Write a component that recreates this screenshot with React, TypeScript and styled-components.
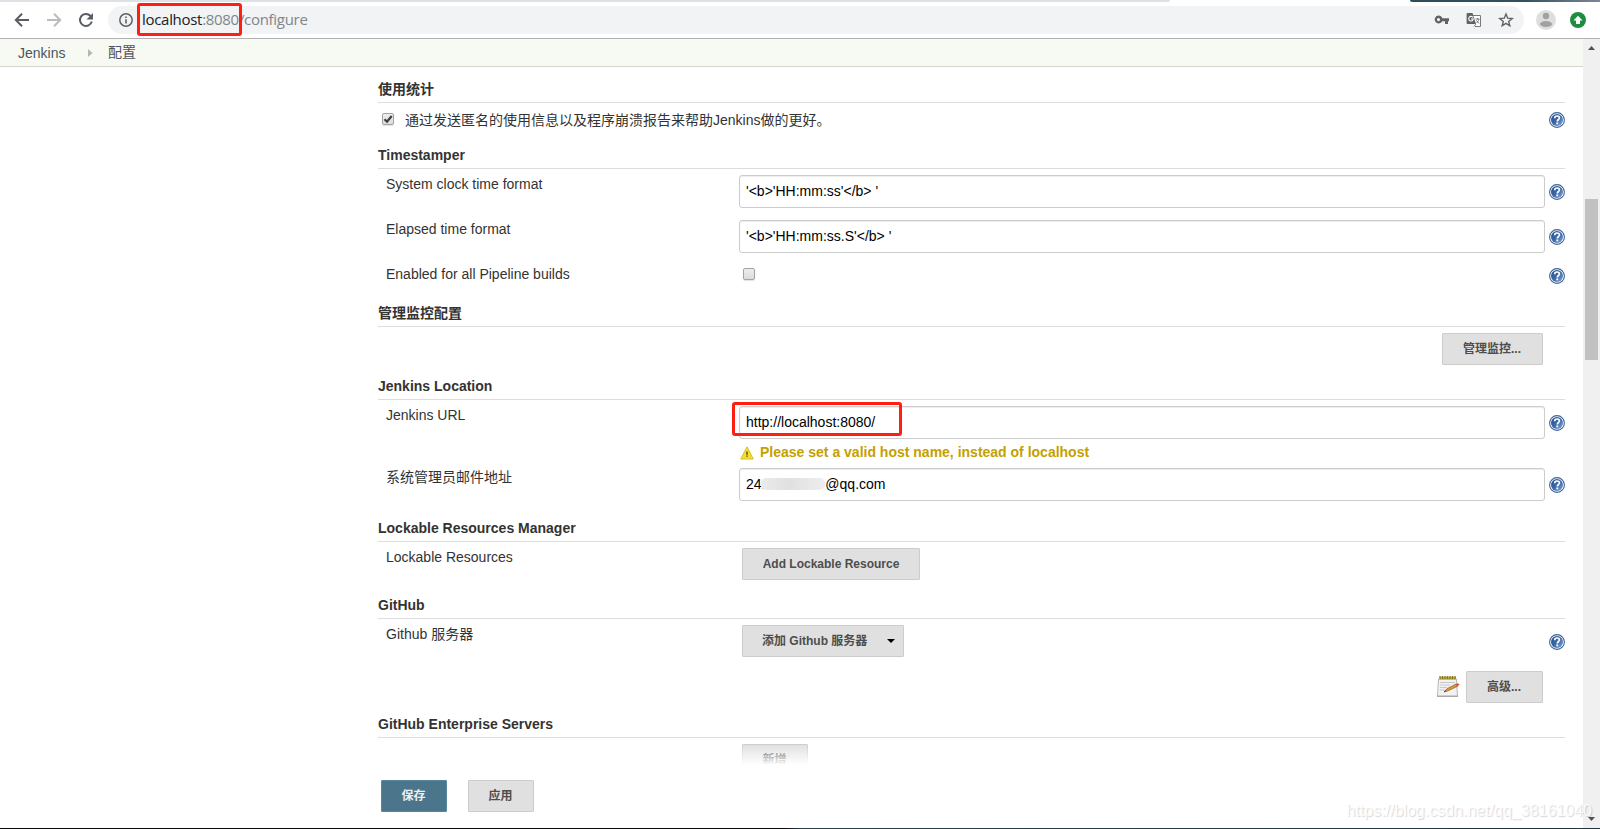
import React from "react";
import styled, { createGlobalStyle } from "styled-components";

const Global = createGlobalStyle`
  * { box-sizing: border-box; }
  body { margin: 0; background: #fff; overflow: hidden; }
  button, input { font-family: inherit; }
`;

const sans = `"Liberation Sans", "Noto Sans CJK SC", sans-serif`;

const Screen = styled.div`
  position: relative;
  width: 1600px;
  height: 829px;
  display: flex;
  flex-direction: column;
  background: #fff;
  color: #333;
  font: 14px ${sans};
  overflow: hidden;
`;

const TabStrip = styled.div`
  height: 2px;
  flex: none;
  display: flex;
  background: #fff;
`;
const InactiveTabs = styled.div`
  width: 1170px;
  border-bottom-right-radius: 2px;
  background: #dee1e6;
`;
const ActiveTab = styled.div`
  width: 240px;
  background: #fff;
`;
const Desktop = styled.div`
  flex: 1;
  border-bottom-left-radius: 2px;
  background: linear-gradient(90deg, #2e4c5a, #34505e 60%, #7a8799);
`;

const Toolbar = styled.div`
  height: 37px;
  flex: none;
  display: flex;
  align-items: center;
  padding: 0 14px 0 14px;
  border-bottom: 1px solid #b2b0b2;
`;
const NavIcon = styled.svg<{ $color?: string }>`
  width: 16px;
  height: 16px;
  flex: none;
  margin-right: 16px;
  fill: none;
  stroke: ${(p) => p.$color ?? "#5a5d61"};
  stroke-width: 2;
`;
const AddressBar = styled.div`
  width: 1416px;
  height: 28px;
  margin-left: -2px;
  padding: 0 10px 0 11px;
  display: flex;
  align-items: center;
  border-radius: 14px;
  background: #f1f3f4;
`;
const Url = styled.div`
  flex: 1;
  margin-left: 9px;
  padding-bottom: 2px;
  font: 15px/20px "Open Sans", "Noto Sans", sans-serif;
  letter-spacing: -0.3px;
  color: #80868b;
  span { color: #202124; }
`;
const BarIcons = styled.div`
  display: flex;
  align-items: center;
  gap: 16px;
`;
const Account = styled.div`
  display: flex;
  align-items: center;
  gap: 14px;
  margin-left: 12px;
`;

const Breadcrumbs = styled.nav`
  height: 28px;
  flex: none;
  display: flex;
  align-items: center;
  padding-left: 18px;
  background: #f6faf2;
  border-bottom: 1px solid #d3d7cf;
  color: #4d545d;
  font-size: 14px;
`;
const Crumb = styled.span<{ $width?: number }>`
  width: ${(p) => (p.$width ? `${p.$width}px` : "auto")};
  line-height: 20px;
  padding-bottom: ${(p) => (p.$width ? 0 : "2px")};
`;
const CrumbArrow = styled.svg`
  width: 5px;
  height: 8px;
  margin-right: 15px;
`;

const Body = styled.div`
  flex: 1;
  min-height: 0;
  display: flex;
`;
const Page = styled.div`
  width: 1583px;
  display: flex;
  flex-direction: column;
`;
const Config = styled.main`
  height: 698px;
  padding: 6px 18px 0 378px;
  overflow: hidden;
`;
const Heading = styled.h2`
  height: 30px;
  margin: 0;
  padding-top: 6px;
  border-bottom: 1px solid #ddd;
  font-size: 14px;
  line-height: 20px;
  font-weight: bold;
  white-space: nowrap;
`;
const Row = styled.div<{ $h: number }>`
  height: ${(p) => p.$h}px;
  display: grid;
  grid-template-columns: 361px 806px 20px;
  padding-top: 6px;
`;
const Label = styled.label`
  padding-left: 8px;
  line-height: 18px;
  white-space: nowrap;
`;
const Setting = styled.div<{ $end?: boolean }>`
  display: flex;
  align-items: flex-start;
  align-content: flex-start;
  flex-wrap: wrap;
  gap: 5px 6px;
  padding: ${(p) => (p.$end ? "0 2px 0 0" : "0")};
  justify-content: ${(p) => (p.$end ? "flex-end" : "flex-start")};
`;
const CheckLine = styled.div`
  grid-column: 1 / 3;
  display: flex;
  align-items: center;
  height: 22px;
  padding-left: 4px;
  gap: 11px;
  line-height: 20px;
  white-space: nowrap;
`;
const TextBox = styled.div<{ $lift?: number }>`
  width: 806px;
  height: 33px;
  display: flex;
  align-items: center;
  padding: 0 6px ${(p) => p.$lift ?? 2}px;
  border: 1px solid #ccc;
  border-radius: 3px;
  box-shadow: inset 0 1px 1px rgba(0, 0, 0, 0.075);
  color: #000;
  font-size: 14px;
  white-space: pre;
`;
const Redacted = styled.span`
  position: relative;
  width: 64px;
  height: 12px;
  margin-left: -8px;
  border-radius: 5px;
  background: linear-gradient(90deg, #ebebeb, #e0e0e0 45%, #eee);
`;
const Warning = styled.div`
  display: flex;
  align-items: center;
  gap: 6px;
  height: 16px;
  padding-left: 1px;
  color: #c4a000;
  font-weight: bold;
  svg { position: relative; top: 1px; }
`;
const Check = styled.span<{ $offset?: boolean }>`
  width: 12px;
  height: 12px;
  margin: ${(p) => (p.$offset ? "3px 0 0 4px" : "-3px 0 0")};
  border: 1px solid #a3a3a3;
  border-radius: 2px;
  background: linear-gradient(#ededed, #dcdcdc);
  box-shadow: 0 1px 1px rgba(0, 0, 0, 0.12);
  svg { display: block; width: 10px; height: 10px; }
`;
const Button = styled.button<{ $w: number; $primary?: boolean; $indent?: boolean; $latin?: boolean; $menu?: boolean }>`
  width: ${(p) => p.$w}px;
  height: 32px;
  flex: none;
  display: flex;
  align-items: center;
  justify-content: ${(p) => (p.$menu ? "space-between" : "center")};
  padding: ${(p) => (p.$latin ? "0" : p.$menu ? "0 8px 3px 19px" : "0 1px 3px 0")};
  margin-left: ${(p) => (p.$indent ? "3px" : "0")};
  border: 1px solid ${(p) => (p.$primary ? "#5788a1" : "#ccc")};
  border-radius: 1px;
  background: ${(p) => (p.$primary ? "#4b758b" : "#e0e0e0")};
  color: ${(p) => (p.$primary ? "#eee" : "#4d4d4d")};
  font: bold 12px ${sans};
  white-space: nowrap;
  svg { margin-top: 2px; }
`;
const HelpCell = styled.div<{ $top: number }>`
  padding: ${(p) => p.$top}px 0 0 4px;
  svg { display: block; }
`;
const ActionBar = styled.footer`
  position: relative;
  flex: 1;
  display: flex;
  align-items: flex-start;
  gap: 21px;
  padding: 15px 0 0 381px;
  background: #fff;
  &::before {
    content: "";
    position: absolute;
    left: 0;
    right: 0;
    top: -21px;
    height: 21px;
    background: linear-gradient(rgba(255, 255, 255, 0), #fff);
  }
`;
const ScrollTrack = styled.div`
  width: 17px;
  display: flex;
  flex-direction: column;
  align-items: center;
  background: #f0f0f0;
  margin-top: -28px;
`;
const ScrollArrow = styled.svg`
  width: 17px;
  height: 17px;
  flex: none;
`;
const ScrollThumb = styled.div`
  width: 13px;
  height: 161px;
  margin: 143px 0 auto;
  background: #c1c1c1;
`;
const Taskbar = styled.div`
  height: 1px;
  flex: none;
  background: linear-gradient(90deg, #080808 49%, #2b3d45 50%, #22333c);
`;
const Marker = styled.div<{ $x: number; $y: number; $w: number; $h: number }>`
  position: absolute;
  left: ${(p) => p.$x}px;
  top: ${(p) => p.$y}px;
  width: ${(p) => p.$w}px;
  height: ${(p) => p.$h}px;
  border: 3px solid #fe1f10;
  border-radius: 3px;
`;
const Watermark = styled.div`
  position: absolute;
  right: 8px;
  bottom: 8px;
  font: 16px/20px ${sans};
  color: rgba(255, 255, 255, 0.85);
  text-shadow: 1px 1px 1px rgba(0, 0, 0, 0.16);
`;

const HelpIcon = () => (
  <svg width="16" height="16" viewBox="0 0 16 16">
    <defs>
      <linearGradient id="helpFill" x1="0" y1="0" x2="1" y2="1">
        <stop offset="0" stopColor="#24508f" />
        <stop offset="0.5" stopColor="#3b68a8" />
        <stop offset="1" stopColor="#86a6d2" />
      </linearGradient>
    </defs>
    <circle cx="8" cy="8" r="7.4" fill="#fff" stroke="#3c6296" strokeWidth="1.1" />
    <circle cx="8" cy="8" r="6" fill="url(#helpFill)" />
    <path d="M5.7 6.2C5.7 4.7 6.7 4 8 4s2.4.8 2.4 2c0 1.5-2.1 1.6-2.1 3.4" fill="none" stroke="#fff" strokeWidth="1.7" />
    <rect x="7.3" y="10.5" width="1.9" height="1.8" fill="#fff" />
  </svg>
);

const Help = ({ top }: { top: number }) => (
  <HelpCell $top={top}>
    <HelpIcon />
  </HelpCell>
);

const WarningIcon = () => (
  <svg width="14" height="14" viewBox="0 0 14 14">
    <path d="M7 .8 13.3 13H.7Z" fill="#f3df2c" stroke="#d9bf2a" strokeWidth="1" strokeLinejoin="round" />
    <path d="M7 5.500v3.300M7 9.500v1.300" stroke="#5d5518" strokeWidth="1.500" />
  </svg>
);

const Notepad = styled.svg`
  width: 24px;
  height: 24px;
  margin-top: 4px;
`;
const NotepadIcon = () => (
  <Notepad viewBox="0 0 24 24">
    <path d="M2.500 4h18l1 17.500H1.500Z" fill="#f2f2f2" stroke="#a5a5a5" strokeWidth=".8" />
    <path d="M1 20.500h21v1.500H1Z" fill="#aaa" />
    <path d="M3.500 1.500h16.500v3H3.500Z" fill="#b5a63e" />
    <path d="M4 1v3M6.500 1v3M9 1v3M11.500 1v3M14 1v3M16.500 1v3M19 1v3" stroke="#81741a" />
    <path d="M4 7.500h15M4 10h10M4 12.500h7M4 15h5" stroke="#c8c8c8" />
    <path d="m8 17 3-3.300L20 9l1.500 2.300L11.500 16Z" fill="#d9993a" stroke="#86591e" strokeWidth=".7" />
    <path d="m8 17 1.500-1.800.9 1Z" fill="#444" />
    <path d="m20 9 2-.8 1.500 1.500-2 1.600Z" fill="#e0473a" />
  </Notepad>
);

const KeyIcon = () => (
  <svg width="16" height="16" viewBox="0 0 16 16">
    <path fillRule="evenodd" fill="#5f6368" d="M4.500 3.500a4 4 0 0 1 3.800 2.800H15v3h-1V12h-3V9.300H8.300A4 4 0 1 1 4.500 3.500Zm0 2.500a1.500 1.500 0 1 0 0 3.200 1.500 1.500 0 0 0 0-3.200Z" />
  </svg>
);
const TranslateIcon = () => (
  <svg width="16" height="16" viewBox="0 0 16 16">
    <path d="M7 3.500h7.500v11H9" fill="#fff" stroke="#777b80" />
    <path d="M1.500 1h5l3.500 11H1.500a.9.900 0 0 1-.9-.9V1.900A.9.900 0 0 1 1.500 1Z" fill="#5f6368" />
    <path d="M7 5.500A2.300 2.300 0 1 0 7.300 7H5" fill="none" stroke="#fff" strokeWidth="1.100" />
    <path d="M9.500 7h4M11.500 6v1M13 7c-.5 2-1.500 3-2.500 4M10.500 8.500 13 11.500M8 14.500l2-2.500" fill="none" stroke="#777b80" />
  </svg>
);
const StarIcon = () => (
  <svg width="16" height="16" viewBox="0 0 16 16">
    <path d="m8 2 1.700 4.200 4.500.3-3.500 2.900 1.100 4.400L8 11.400l-3.800 2.400 1.100-4.400-3.500-2.900 4.500-.3Z" fill="none" stroke="#5f6368" strokeWidth="1.400" />
  </svg>
);
const AvatarIcon = () => (
  <svg width="20" height="20" viewBox="0 0 20 20">
    <circle cx="10" cy="10" r="10" fill="#dedede" />
    <circle cx="10" cy="6" r="3.200" fill="#a1a1a1" />
    <ellipse cx="10" cy="14" rx="6" ry="3" fill="#a1a1a1" />
  </svg>
);
const UpdateIcon = () => (
  <svg width="16" height="16" viewBox="0 0 16 16">
    <circle cx="8" cy="8" r="8" fill="#1e8e3e" />
    <path d="m8 3.700 4.500 4.800H10V12H6V8.500H3.500Z" fill="#fff" />
  </svg>
);

export default function App() {
  return (
    <Screen>
      <Global />
      <TabStrip>
        <InactiveTabs />
        <ActiveTab />
        <Desktop />
      </TabStrip>
      <Toolbar>
        <NavIcon viewBox="0 0 16 16">
          <path d="M15 8H2M8 1.700 1.800 8 8 14.300" />
        </NavIcon>
        <NavIcon viewBox="0 0 16 16" $color="#babcbe">
          <path d="M1 8h13M8 1.700 14.200 8 8 14.300" />
        </NavIcon>
        <NavIcon viewBox="0 0 16 16">
          <path d="M13.800 9.500A6 6 0 1 1 12.300 3.700L14 5.500" />
          <path d="M15 1v6.500H8.500Z" fill="#5a5d61" stroke="none" />
        </NavIcon>
        <AddressBar>
          <svg width="14" height="14" viewBox="0 0 14 14">
            <circle cx="7" cy="7" r="6.200" fill="none" stroke="#5f6368" strokeWidth="1.500" />
            <path d="M7 6.200v4.300M7 3.500v1.600" stroke="#5f6368" strokeWidth="1.600" />
          </svg>
          <Url>
            <span>localhost</span>:8080/configure
          </Url>
          <BarIcons>
            <KeyIcon />
            <TranslateIcon />
            <StarIcon />
          </BarIcons>
        </AddressBar>
        <Account>
          <AvatarIcon />
          <UpdateIcon />
        </Account>
      </Toolbar>
      <Breadcrumbs>
        <Crumb $width={70}>Jenkins</Crumb>
        <CrumbArrow viewBox="0 0 5 8">
          <path d="M0 0 4.500 4 0 8Z" fill="#b4b8b1" />
        </CrumbArrow>
        <Crumb>配置</Crumb>
      </Breadcrumbs>
      <Body>
        <Page>
          <Config>
            <Heading>使用统计</Heading>
            <Row $h={36}>
              <CheckLine>
                <Check>
                  <svg viewBox="0 0 10 10">
                    <path d="M1.500 5.300 4 7.700 8.700 2" fill="none" stroke="#3c3c3c" strokeWidth="2.200" />
                  </svg>
                </Check>
                通过发送匿名的使用信息以及程序崩溃报告来帮助Jenkins做的更好。
              </CheckLine>
              <Help top={3} />
            </Row>

            <Heading>Timestamper</Heading>
            <Row $h={45}>
              <Label>System clock time format</Label>
              <Setting>
                <TextBox>{"'<b>'HH:mm:ss'</b> '"}</TextBox>
              </Setting>
              <Help top={9} />
            </Row>
            <Row $h={45}>
              <Label>Elapsed time format</Label>
              <Setting>
                <TextBox>{"'<b>'HH:mm:ss.S'</b> '"}</TextBox>
              </Setting>
              <Help top={9} />
            </Row>
            <Row $h={38}>
              <Label>Enabled for all Pipeline builds</Label>
              <Setting>
                <Check $offset />
              </Setting>
              <Help top={3} />
            </Row>

            <Heading>管理监控配置</Heading>
            <Row $h={43}>
              <Label />
              <Setting $end>
                <Button $w={101}>管理监控...</Button>
              </Setting>
            </Row>

            <Heading>Jenkins Location</Heading>
            <Row $h={62}>
              <Label>Jenkins URL</Label>
              <Setting>
                <TextBox>http://localhost:8080/</TextBox>
                <Warning>
                  <WarningIcon />
                  Please set a valid host name, instead of localhost
                </Warning>
              </Setting>
              <Help top={9} />
            </Row>
            <Row $h={50}>
              <Label>系统管理员邮件地址</Label>
              <Setting>
                <TextBox>
                  241
                  <Redacted />
                  @qq.com
                </TextBox>
              </Setting>
              <Help top={9} />
            </Row>

            <Heading>Lockable Resources Manager</Heading>
            <Row $h={47}>
              <Label>Lockable Resources</Label>
              <Setting>
                <Button $w={178} $indent $latin>
                  Add Lockable Resource
                </Button>
              </Setting>
            </Row>

            <Heading>GitHub</Heading>
            <Row $h={46}>
              <Label>Github 服务器</Label>
              <Setting>
                <Button $w={162} $indent $menu>
                  添加 Github 服务器
                  <svg width="8" height="4" viewBox="0 0 8 4">
                    <path d="M0 0h8L4 4Z" fill="#000" />
                  </svg>
                </Button>
              </Setting>
              <Help top={9} />
            </Row>
            <Row $h={43}>
              <Label />
              <Setting $end>
                <NotepadIcon />
                <Button $w={77}>高级...</Button>
              </Setting>
            </Row>

            <Heading>GitHub Enterprise Servers</Heading>
            <Row $h={47}>
              <Label />
              <Setting>
                <Button $w={66} $indent>
                  新增
                </Button>
              </Setting>
            </Row>
          </Config>
          <ActionBar>
            <Button $w={66} $primary>
              保存
            </Button>
            <Button $w={66}>应用</Button>
          </ActionBar>
        </Page>
        <ScrollTrack>
          <ScrollArrow viewBox="0 0 17 17">
            <path d="M5 11h7L8.500 7Z" fill="#505050" />
          </ScrollArrow>
          <ScrollThumb />
          <ScrollArrow viewBox="0 0 17 17">
            <path d="M5 6h7l-3.500 4Z" fill="#505050" />
          </ScrollArrow>
        </ScrollTrack>
      </Body>
      <Taskbar />
      <Marker $x={137} $y={3} $w={105} $h={33} />
      <Marker $x={732} $y={402} $w={170} $h={34} />
      <Watermark>https://blog.csdn.net/qq_38161040</Watermark>
    </Screen>
  );
}
